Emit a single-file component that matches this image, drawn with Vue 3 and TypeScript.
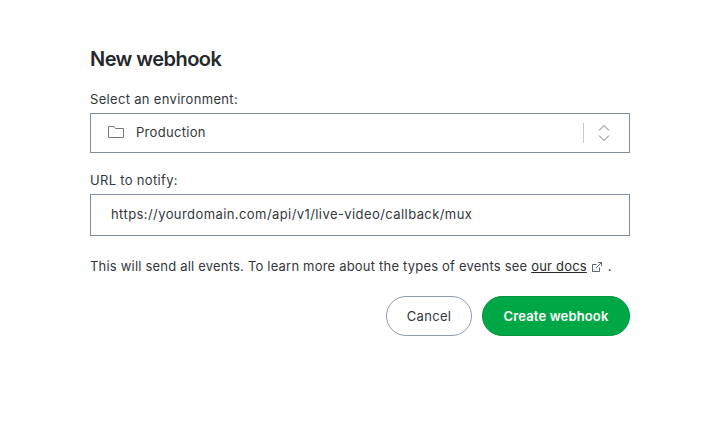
<script setup lang="ts">
const title: string = 'New webhook'
</script>

<template>
  <div class="page">
    <h1 class="title">{{ title }}</h1>
    <label class="label">Select an environment:</label>
    <div class="select">
      <svg class="folder" width="18" height="14" viewBox="0 0 18 14" fill="none" stroke="#6f7780" stroke-width="1">
        <path d="M1.5 12.5V1.5H7L8.5 3.5H16.5V12.5Z" />
      </svg>
      <span class="value">Production</span>
      <span class="divider"></span>
      <svg class="updown" width="12" height="20" viewBox="0 0 12 20" fill="none" stroke="#6f7780" stroke-width="1">
        <path d="M1 7.5L6 2.5L11 7.5" />
        <path d="M1 12.5L6 17.5L11 12.5" />
      </svg>
    </div>
    <label class="label second">URL to notify:</label>
    <div class="input">https://yourdomain.com/api/v1/live-video/callback/mux</div>
    <p class="note">
      This will send all events. To learn more about the types of events see
      <a class="link">our docs</a>
      <svg class="ext" width="12" height="12" viewBox="0 0 12 12" fill="none" stroke="#5f666d" stroke-width="1">
        <path d="M8.5 6.5V10.5H1.5V3.5H5.5" />
        <path d="M5 7L10.5 1.5M7 1.5H10.5V5" />
      </svg>
      <span class="dot">.</span>
    </p>
    <div class="actions">
      <button class="btn cancel">Cancel</button>
      <button class="btn create">Create webhook</button>
    </div>
  </div>
</template>

<style scoped>
.page {
  width: 540px;
  margin-left: 90px;
  padding-top: 46px;
  font-family: "Inter", "Liberation Sans", sans-serif;
  font-size: 13px;
  color: #33373b;
  letter-spacing: 0;
}
.title {
  margin: 0 0 19px;
  font-size: 20px;
  line-height: 26px;
  font-weight: 600;
  color: #26282b;
  letter-spacing: -0.55px;
}
.label {
  display: block;
  line-height: 16px;
  margin-bottom: 6px;
  letter-spacing: 0.32px;
}
.second {
  margin-top: 19px;
  margin-bottom: 6px;
}
.select {
  height: 40px;
  box-sizing: border-box;
  border: 1px solid #7e8c9c;
  display: flex;
  align-items: center;
  padding-left: 16px;
}
.folder {
  margin-right: 11px;
  margin-bottom: 2px;
}
.value {
  flex: 1;
  letter-spacing: 0.3px;
  margin-bottom: 2px;
}
.divider {
  width: 1px;
  height: 20px;
  background: #c4c9cd;
  margin-right: 14px;
}
.updown {
  margin-right: 19px;
}
.input {
  height: 42px;
  box-sizing: border-box;
  border: 1px solid #7e8c9c;
  display: flex;
  align-items: center;
  padding-left: 20px;
  padding-bottom: 2px;
  letter-spacing: 0.42px;
}
.note {
  margin: 21px 0 0;
  line-height: 18px;
  white-space: nowrap;
  letter-spacing: 0.2px;
}
.link {
  text-decoration: underline;
  color: #26282b;
}
.ext {
  margin-left: 4px;
  vertical-align: -2px;
}
.dot {
  margin-left: 5px;
}
.actions {
  display: flex;
  justify-content: flex-end;
  gap: 10px;
  margin-top: 21px;
}
.btn {
  height: 40px;
  border-radius: 20px;
  font-family: inherit;
  font-size: 13px;
  box-sizing: border-box;
}
.cancel {
  width: 86px;
  background: #fff;
  border: 1px solid #8e9bab;
  color: #33373b;
  letter-spacing: 0.3px;
}
.create {
  width: 148px;
  background: #00a845;
  border: 1px solid #00953d;
  color: #fff;
  font-weight: 600;
  letter-spacing: 0.15px;
}
</style>
